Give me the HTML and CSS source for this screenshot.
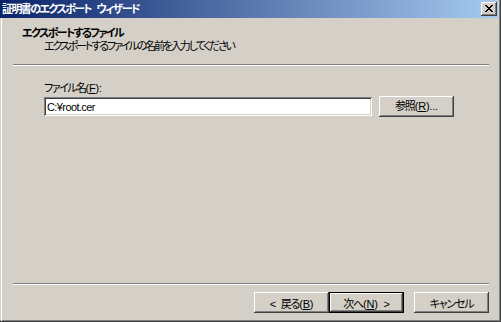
FILE: index.html
```html
<!DOCTYPE html>
<html lang="ja">
<head>
  <meta charset="UTF-8" />
  <title>証明書のエクスポート ウィザード</title>
  <link rel="stylesheet" href="styles.css">
</head>
<body>
  <div class="window">
    <div class="titlebar">
      <span class="title">証明書のエクスポート ウィザード</span>
      <button class="close" aria-label="閉じる">
        <svg width="16" height="14" viewBox="0 0 16 14">
          <path fill="#000" d="M4 3h2v1h-2z M10 3h2v1h-2z M5 4h2v1h-2z M9 4h2v1h-2z M6 5h4v1h-4z M7 6h2v1h-2z M6 7h4v1h-4z M5 8h2v1h-2z M9 8h2v1h-2z M4 9h2v1h-2z M10 9h2v1h-2z"/>
        </svg>
      </button>
    </div>

    <div class="frame">
      <div class="header">
        <div class="head-title">エクスポートするファイル</div>
        <div class="head-sub">エクスポートするファイルの名前を入力してください</div>
      </div>

      <div class="separator"></div>

      <div class="content">
        <label for="filename">ファイル名<span class="key">(<u>F</u>):</span></label>
        <div class="file-row">
          <input type="text" id="filename" value="C:¥root.cer" />
          <button class="btn">参照<span class="key">(<u>R</u>)...</span></button>
        </div>
      </div>

      <div class="footer">
        <div class="separator"></div>
        <div class="buttons">
          <button class="btn"><span class="key">&lt;</span> 戻る<span class="key">(<u>B</u>)</span></button>
          <button class="btn default">次へ<span class="key">(<u>N</u>) &gt;</span></button>
          <button class="btn cancel">キャンセル</button>
        </div>
      </div>
    </div>
  </div>
</body>
</html>
```

FILE: styles.css
```css
body {
  margin: 0;
  background: #d4d0c8;
  font-family: "Liberation Sans", "Noto Sans CJK JP", sans-serif;
  font-size: 11px;
  font-feature-settings: "palt";
  letter-spacing: -1.5px;
  color: #000;
}

.window {
  width: 501px;
  height: 322px;
  box-sizing: border-box;
  background: #d4d0c8;
  border-right: 1px solid #404040;
  border-bottom: 1px solid #404040;
  box-shadow: inset -1px -1px #808080;
  display: flex;
  flex-direction: column;
}

.titlebar {
  height: 18px;
  margin-right: 2px;
  padding-left: 2px;
  background: linear-gradient(to right, #0a246a, #a6caf0);
  display: flex;
  align-items: center;
  justify-content: space-between;
}

.title {
  color: white;
  font-weight: bold;
  line-height: 18px;
  letter-spacing: -1.6px;
  word-spacing: 4px;
}

.close {
  width: 16px;
  height: 14px;
  padding: 0;
  margin-right: 1px;
  border: none;
  background: #d4d0c8;
  box-shadow: inset -1px -1px #404040, inset 1px 1px #fff, inset -2px -2px #808080;
  display: block;
}

.close svg {
  display: block;
}

.frame {
  flex: 1;
  margin-left: 1px;
  border-left: 1px solid #fff;
  display: flex;
  flex-direction: column;
}

.header {
  padding: 9px 0 0 20px;
  line-height: 13px;
}

.head-title {
  font-weight: bold;
  letter-spacing: -1.6px;
}

.head-sub {
  padding-left: 22px;
  letter-spacing: -2.1px;
}

.separator {
  margin: 11px 11px 0 11px;
  border-top: 1px solid #808080;
  border-bottom: 1px solid #fff;
}

.content {
  padding: 16px 0 0 42px;
  line-height: 13px;
}

.key {
  letter-spacing: -0.2px;
}

.file-row {
  margin-top: 1px;
  display: flex;
  align-items: center;
  gap: 7px;
}

input {
  width: 328px;
  height: 19px;
  box-sizing: border-box;
  margin: 0;
  padding: 0 0 0 3px;
  border: none;
  background: white;
  font: inherit;
  letter-spacing: -0.6px;
  box-shadow: inset 1px 1px #808080, inset -1px -1px #fff, inset 2px 2px #404040, inset -2px -2px #d4d0c8;
  outline: none;
}

.btn {
  width: 75px;
  height: 21px;
  padding: 0;
  border: none;
  background: #d4d0c8;
  font: inherit;
  letter-spacing: -1.2px;
  word-spacing: 3px;
  color: #000;
  box-shadow: inset -1px -1px #404040, inset 1px 1px #fff, inset -2px -2px #808080;
}

.btn.default {
  box-shadow: inset 0 0 0 1px #000, inset -2px -2px #404040, inset 2px 2px #fff, inset -3px -3px #808080;
}

.footer {
  margin-top: auto;
  padding-bottom: 8px;
}

.buttons {
  margin-top: 7px;
  padding-right: 11px;
  display: flex;
  justify-content: flex-end;
}

.btn.cancel {
  margin-left: 10px;
}
```
